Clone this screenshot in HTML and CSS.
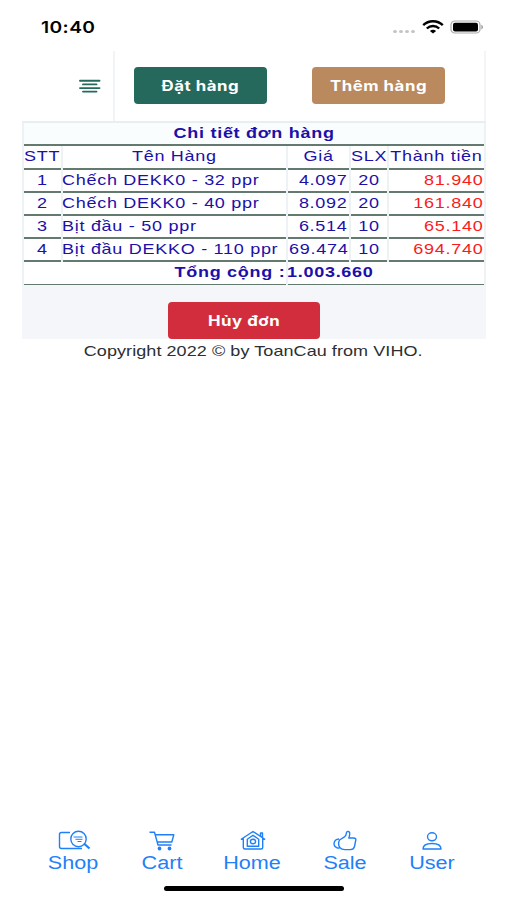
FILE: index.html
```html
<!DOCTYPE html>
<html lang="vi">
<head>
    <meta charset="UTF-8">
    <meta name="viewport" content="width=device-width, initial-scale=1.0">
    <title>Chi tiết đơn hàng</title>
    <link rel="stylesheet" href="styles.css">
</head>
<body>
    <div class="status">
        <span class="wide clock">10:40</span>
        <div class="status-icons">
            <div class="dots"><i></i><i></i><i></i><i></i></div>
            <svg class="wifi" width="22" height="14" viewBox="0 0 22 14" fill="none" stroke="#000" stroke-width="2.4">
                <path d="M1.2 5.2C6.5 0 15.5 0 20.8 5.2"/>
                <path d="M4.8 8.5C8.3 5.2 13.7 5.2 17.2 8.5"/>
                <path d="M7.9 10.9C9.6 9.3 12.4 9.3 14.1 10.9L11 13.6Z" fill="#000" stroke="none"/>
            </svg>
            <svg class="battery" width="34" height="14" viewBox="0 0 34 14">
                <rect x="1" y="1" width="29" height="12" rx="3.8" fill="none" stroke="#aaa" stroke-width="1.2"/>
                <rect x="3" y="2.8" width="25" height="8.6" rx="2" fill="#000"/>
                <path d="M31.4 4.8C33.4 5.6 33.4 8.6 31.4 9.4Z" fill="#999"/>
            </svg>
        </div>
    </div>

    <header class="header">
        <div class="menu">
            <svg width="22" height="14" viewBox="0 0 22 14" stroke="#24695c" stroke-width="1.9" stroke-linecap="round">
                <path d="M1 1.7H20.500M4 5.4H17.500M1 9.1H20.500M4 12.6H17.500"/>
            </svg>
        </div>
        <div class="actions">
            <button class="btn btn-primary"><span class="wide">Đặt hàng</span></button>
            <button class="btn btn-secondary"><span class="wide">Thêm hàng</span></button>
        </div>
    </header>

    <main class="panel">
        <table class="order">
            <colgroup>
                <col class="c-stt"><col class="c-name"><col class="c-price"><col class="c-qty"><col class="c-total">
            </colgroup>
            <tr><th colspan="5"><span class="wide">Chi tiết đơn hàng</span></th></tr>
            <tr>
                <td><span class="wide">STT</span></td>
                <td><span class="wide">Tên Hàng</span></td>
                <td><span class="wide">Giá</span></td>
                <td><span class="wide">SLX</span></td>
                <td><span class="wide">Thành tiền</span></td>
            </tr>
            <tr>
                <td><span class="wide">1</span></td>
                <td class="left"><span class="wide">Chếch DEKK0 - 32 ppr</span></td>
                <td class="right"><span class="wide">4.097</span></td>
                <td><span class="wide">20</span></td>
                <td class="right red"><span class="wide">81.940</span></td>
            </tr>
            <tr>
                <td><span class="wide">2</span></td>
                <td class="left"><span class="wide">Chếch DEKK0 - 40 ppr</span></td>
                <td class="right"><span class="wide">8.092</span></td>
                <td><span class="wide">20</span></td>
                <td class="right red"><span class="wide">161.840</span></td>
            </tr>
            <tr>
                <td><span class="wide">3</span></td>
                <td class="left"><span class="wide">Bịt đầu - 50 ppr</span></td>
                <td class="right"><span class="wide">6.514</span></td>
                <td><span class="wide">10</span></td>
                <td class="right red"><span class="wide">65.140</span></td>
            </tr>
            <tr>
                <td><span class="wide">4</span></td>
                <td class="left"><span class="wide">Bịt đầu DEKKO - 110 ppr</span></td>
                <td class="right"><span class="wide">69.474</span></td>
                <td><span class="wide">10</span></td>
                <td class="right red"><span class="wide">694.740</span></td>
            </tr>
            <tr>
                <th class="right" colspan="2"><span class="wide">Tổng cộng :</span></th>
                <th class="left" colspan="3"><span class="wide">1.003.660</span></th>
            </tr>
        </table>
        <div class="cancel">
            <button class="btn btn-danger"><span class="wide">Hủy đơn</span></button>
        </div>
    </main>
    <footer class="copyright"><span class="wide">Copyright 2022 © by ToanCau from VIHO.</span></footer>

    <nav class="tabs">
        <a class="tab">
            <svg width="38" height="22" viewBox="-2 0 38 22">
                <path d="M14 2.500H5.500Q3.500 2.500 3.500 4.500V16.500Q3.500 18.500 5.500 18.500H26"/>
                <circle cx="22.500" cy="9" r="7.700"/>
                <path d="M17.500 7H26.500M19.500 9.300H26.500M21.500 11.500H25.500" stroke-width="1"/>
                <path d="M28 13.500L33.500 18.500" stroke-width="2.200"/>
            </svg>
            <span class="wide">Shop</span>
        </a>
        <a class="tab">
            <svg width="28" height="22" viewBox="0 0 28 22">
                <path d="M1.500 2.300H6.500L10 15H23.500M7.200 4.700H25.800L23.800 12H9.200"/>
                <circle cx="11.500" cy="18.500" r="1.200" fill="#1f80f8"/>
                <circle cx="21.500" cy="18.500" r="1.200" fill="#1f80f8"/>
            </svg>
            <span class="wide">Cart</span>
        </a>
        <a class="tab">
            <svg width="28" height="22" viewBox="0 0 28 22">
                <path d="M1.800 9.500L14 1.500L26.200 9.500M21.500 6V3H23.500V7.500M4.300 8.500V17.500Q4.300 19 6 19H22Q23.700 19 23.700 17.500V8.500"/>
                <path d="M8.300 16.300V9.200L14 5.200L19.700 9.200V16.300Z"/>
                <ellipse cx="14" cy="11.500" rx="2.600" ry="2.300"/>
            </svg>
            <span class="wide">Home</span>
        </a>
        <a class="tab">
            <svg width="28" height="22" viewBox="0 0 28 22">
                <path d="M8.500 10L13.500 6.800Q15.200 5.500 15.300 3.500Q15.700 1 17.500 1.500Q19.500 2.100 18.300 6.500L17.800 8H22.500Q25.300 8.200 24.800 10L23.500 16.500Q22.700 19.500 19.500 19.600H14Q10.500 19.600 8.800 17.500Q6.500 14 8.500 10Z"/>
                <path d="M8 9Q3.500 9.300 3 13.500Q3 17.800 8.500 18.300"/>
            </svg>
            <span class="wide">Sale</span>
        </a>
        <a class="tab">
            <svg width="28" height="22" viewBox="0 0 28 22">
                <ellipse cx="14" cy="6.800" rx="4.500" ry="4"/>
                <path d="M5 19Q5 13.500 14 13.500Q23 13.500 23 19Z"/>
            </svg>
            <span class="wide">User</span>
        </a>
    </nav>
    <div class="home-bar"></div>
</body>
</html>
```
FILE: styles.css
```css
* {
    box-sizing: border-box;
}

body {
    margin: 0;
    height: 900px;
    display: flex;
    flex-direction: column;
    overflow: hidden;
    background: #fff;
    font-family: "Liberation Sans", Arial, sans-serif;
    font-size: 15px;
}

/* stretched lettering */
.wide {
    display: inline-block;
    white-space: nowrap;
    transform: scaleX(1.2);
}

.status {
    height: 51px;
    padding: 0 23px 0 41px;
    display: flex;
    justify-content: space-between;
}

.clock {
    margin-top: 17px;
    font: 600 16px/20px Inter, sans-serif;
    letter-spacing: 0.35px;
    transform-origin: left;
}

.status-icons {
    display: flex;
    align-items: flex-start;
    padding-top: 20px;
}

.dots {
    display: flex;
    gap: 2px;
    margin: 10px 7px 0 0;
}

.dots i {
    width: 4px;
    height: 3px;
    border-radius: 50%;
    background: #c4c4c4;
}

.wifi {
    margin-right: 6px;
}

.header {
    width: 464px;
    height: 70px;
    margin-left: 22px;
    display: flex;
    border-right: 2px solid #f3f5f7;
}

.menu {
    width: 93px;
    padding: 28px 0 0 58px;
    border-right: 2px solid #f0f4f6;
}

.menu svg {
    margin-left: -1px;
}

.actions {
    display: flex;
    gap: 45px;
    padding: 16px 0 0 19px;
}

.btn {
    width: 133px;
    height: 37px;
    padding: 0;
    border: none;
    border-radius: 4px;
    color: #fff;
    font: 700 14px Inter, sans-serif;
    letter-spacing: 0.45px;
}

.btn-primary {
    background: #24695c;
}

.btn-secondary {
    background: #ba895d;
}

.btn-danger {
    width: 152px;
    background: #d22d3d;
}

.panel {
    width: 464px;
    height: 218px;
    margin-left: 22px;
    background: #f4f6fa;
}

.order {
    width: 464px;
    table-layout: fixed;
    border-collapse: separate;
    border-spacing: 2px 0;
    border-top: 2px solid #e8eff1;
    background: #edf2f4;
    color: #1c10a8;
}

.c-stt { width: 37px; }
.c-name { width: 223px; }
.c-price { width: 61px; }
.c-qty { width: 36px; }
.c-total { width: 95px; }

.order td,
.order th {
    height: 23px;
    padding: 0 0 2px;
    border-bottom: 2px solid #64796f;
    background: #fff;
    line-height: 19px;
    letter-spacing: 0.6px;
    text-align: center;
    vertical-align: top;
}

.order tr:nth-child(2) td {
    height: 24px;
}

.order tr:first-child th {
    background: #fafdfe;
}

.order tr:last-child th {
    border-bottom-width: 1px;
}

.order .left {
    text-align: left;
}

.order .right {
    text-align: right;
}

.left .wide {
    margin-left: -1px;
    transform-origin: left;
}

.right .wide {
    margin-right: 1px;
    transform-origin: right;
}

.order .red {
    color: #fa1c1a;
}

.cancel {
    padding: 17px 0 0 146px;
}

.copyright {
    color: #2b2f33;
    line-height: 24px;
    letter-spacing: 0.06px;
    text-align: center;
}

.tabs {
    margin-top: auto;
    padding: 0 32px 0 29px;
    display: grid;
    grid-template-columns: 88px 90px 91px 94px 80px;
    color: #1f80f8;
    font-size: 18px;
    line-height: 22px;
}

.tab {
    display: flex;
    flex-direction: column;
    align-items: center;
}

.tab svg {
    fill: none;
    stroke: #1f80f8;
    stroke-width: 1.4;
    stroke-linejoin: round;
}

.home-bar {
    width: 180px;
    height: 5px;
    margin: 12px 0 9px 164px;
    border-radius: 3px;
    background: #000;
}
```
